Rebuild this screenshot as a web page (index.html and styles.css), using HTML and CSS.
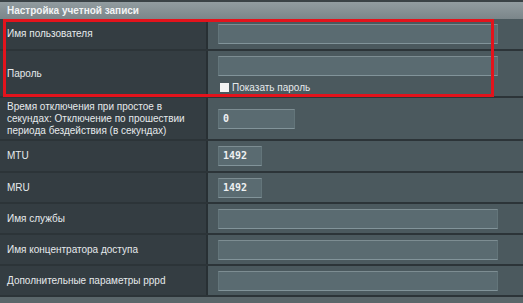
FILE: index.html
```html
<!DOCTYPE html>
<html lang="ru">
<head>
<meta charset="utf-8">
<title>Настройка учетной записи</title>
<link rel="stylesheet" href="styles.css">
</head>
<body>
<div class="page">
  <div class="topstrip"></div>
  <div class="hdr">Настройка учетной записи</div>
  <div class="rows">
    <div class="row r-user">
      <div class="lab">Имя пользователя</div>
      <div class="val"><div class="field wide"></div></div>
    </div>
    <div class="row r-pass">
      <div class="lab">Пароль</div>
      <div class="val">
        <div class="field wide"></div>
        <label class="show"><span class="box"></span>Показать пароль</label>
      </div>
    </div>
    <div class="row r-idle">
      <div class="lab">Время отключения при простое в секундах: Отключение по прошествии периода бездействия (в секундах)</div>
      <div class="val"><div class="field mid">0</div></div>
    </div>
    <div class="row r-mtu">
      <div class="lab">MTU</div>
      <div class="val"><div class="field short">1492</div></div>
    </div>
    <div class="row r-small">
      <div class="lab">MRU</div>
      <div class="val"><div class="field short">1492</div></div>
    </div>
    <div class="row r-small">
      <div class="lab">Имя службы</div>
      <div class="val"><div class="field wide"></div></div>
    </div>
    <div class="row r-small">
      <div class="lab">Имя концентратора доступа</div>
      <div class="val"><div class="field wide"></div></div>
    </div>
    <div class="row r-small">
      <div class="lab">Дополнительные параметры pppd</div>
      <div class="val"><div class="field wide"></div></div>
    </div>
  </div>
  <div class="footer"></div>
  <div class="annot"></div>
</div>
</body>
</html>
```
FILE: styles.css
```css
html, body {
  margin: 0;
  padding: 0;
  background: #4b585d;
}
.page {
  position: relative;
  width: 523px;
  height: 303px;
  overflow: hidden;
  font-family: "Liberation Sans", Arial, sans-serif;
  color: #e6eaec;
  display: flex;
  flex-direction: column;
}
.topstrip {
  height: 2px;
  background: #3a4246;
}
.hdr {
  height: 17px;
  line-height: 17px;
  padding-left: 7px;
  font-size: 10px;
  font-weight: bold;
  color: #f2f4f5;
  background: linear-gradient(#929ca0, #7b868a);
}
.rows {
  display: flex;
  flex-direction: column;
}
.row {
  display: flex;
  border-bottom: 2px solid #2c3438;
}
.r-user { height: 30px; }
.r-pass { height: 45px; }
.r-idle { height: 41px; }
.r-mtu { height: 30px; }
.r-small { height: 29px; }
.lab {
  width: 191px;
  padding: 0 8px 0 7px;
  background: #343d42;
  border-right: 2px solid #283034;
  font-size: 10px;
  line-height: 12px;
  display: flex;
  align-items: center;
}
.val {
  flex: 1;
  padding-left: 10px;
  background: #4b595e;
  display: flex;
  flex-direction: column;
  justify-content: center;
}
.field {
  box-sizing: border-box;
  height: 20px;
  background: #5a6b71;
  border-top: 1px solid #7d8d92;
  border-bottom: 1px solid #82949a;
  border-left: 1px solid #63757a;
  border-right: 1px solid #63757a;
  font-family: "DejaVu Sans Mono", monospace;
  font-size: 10px;
  font-weight: bold;
  line-height: 18px;
  padding-left: 4px;
  color: #eef1f2;
}
.wide { width: 280px; }
.mid { width: 77px; }
.short { width: 44px; }
.r-pass .val {
  justify-content: flex-start;
  padding-top: 5px;
}
.show {
  display: flex;
  align-items: center;
  margin-top: 6px;
  margin-left: 2px;
  font-size: 10px;
  color: #e6eaec;
}
.box {
  width: 9px;
  height: 9px;
  background: #f4f4f4;
  margin-right: 3px;
}
.footer {
  flex: 1;
  background: #5a666a;
}
.annot {
  position: absolute;
  left: 3px;
  top: 19px;
  width: 485px;
  height: 72px;
  border: 3px solid #e3131c;
}
```
